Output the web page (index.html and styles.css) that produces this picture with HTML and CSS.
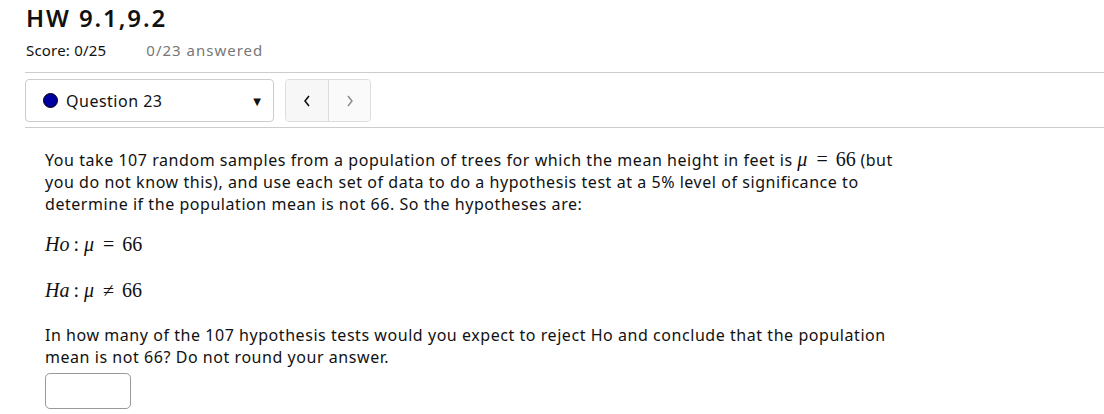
FILE: index.html
```html
<!DOCTYPE html>
<html>
<head>
<meta charset="utf-8">
<link rel="stylesheet" href="styles.css">
</head>
<body>
<div class="page">
  <h1 class="title">HW 9.1,9.2</h1>
  <div class="score-row">
    <span class="score">Score: 0/25</span>
    <span class="answered">0/23 answered</span>
  </div>
  <div class="nav-bar">
    <div class="select">
      <span class="dot"></span>
      <span class="q-label">Question 23</span>
      <span class="caret">&#9660;</span>
    </div>
    <div class="pager">
      <button class="pg prev"><svg width="10" height="14" viewBox="0 0 10 14"><path d="M7 2 L3 7 L7 12" fill="none" stroke="#111" stroke-width="1.6"/></svg></button>
      <button class="pg next"><svg width="10" height="14" viewBox="0 0 10 14"><path d="M3 2 L7 7 L3 12" fill="none" stroke="#888" stroke-width="1.4"/></svg></button>
    </div>
  </div>
  <div class="question">
    <p class="text">You take 107 random samples from a population of trees for which the mean height in feet is <span class="math"><i>μ</i><span class="op">=</span>66</span> (but you do not know this), and use each set of data to do a hypothesis test at a 5% level of significance to determine if the population mean is not 66. So the hypotheses are:</p>
    <p class="math-line"><span class="math"><i>Ho</i><span class="colon">:</span><i>μ</i><span class="op">=</span>66</span></p>
    <p class="math-line"><span class="math"><i>Ha</i><span class="colon">:</span><i>μ</i><span class="op">≠</span>66</span></p>
    <p class="text">In how many of the 107 hypothesis tests would you expect to reject Ho and conclude that the population mean is not 66? Do not round your answer.</p>
    <input class="answer" type="text">
  </div>
</div>
</body>
</html>
```
FILE: styles.css
```css
* { box-sizing: border-box; }
html, body { margin: 0; padding: 0; background: #fff; }
body {
  font-family: "Noto Sans", "DejaVu Sans", sans-serif;
  color: #111;
}
.page { padding: 0 0 0 25px; }
.title {
  margin: 0;
  padding: 3px 0 0 1px;
  font-size: 24px;
  font-weight: 600;
  line-height: 30px;
  letter-spacing: 1.9px;
}
.score-row {
  display: flex;
  gap: 40px;
  padding: 7px 0 0 1px;
  font-size: 15px;
  line-height: 20px;
  height: 39px;
}
.score { letter-spacing: 0.2px; }
.answered { color: #777; letter-spacing: 1px; }
.nav-bar {
  border-top: 1px solid #ccc;
  border-bottom: 1px solid #ccc;
  display: flex;
  gap: 11px;
  padding: 6px 0 5px 0;
}
.select {
  width: 249px;
  height: 43px;
  border: 1px solid #ccc;
  border-radius: 4px;
  display: flex;
  align-items: center;
  padding: 0 12px 0 17px;
}
.dot {
  width: 15px;
  height: 15px;
  border-radius: 50%;
  background: #0000a0;
  border: 1px solid #000;
}
.q-label { margin-left: 8px; font-size: 16px; letter-spacing: 0.5px; flex: 1; }
.caret { font-size: 10px; color: #111; }
.pager {
  display: flex;
  border: 1px solid #ddd;
  border-radius: 4px;
  overflow: hidden;
  height: 43px;
}
.pg {
  width: 42px;
  height: 41px;
  border: 0;
  padding: 0;
  display: flex;
  align-items: center;
  justify-content: center;
  background: #f7f7f7;
}
.pg.next { background: #fafafa; border-left: 1px solid #ddd; }
.question { padding: 20px 0 0 20px; width: 890px; }
.text {
  margin: 0;
  font-size: 16px;
  line-height: 22px;
  letter-spacing: 0.55px;
}
.math-line { margin: 15px 0 0 0; line-height: 29px; }
.math-line + .math-line { margin-top: 16px; }
.math-line + .text { margin-top: 18px; }
.math { font-family: "Liberation Serif", "DejaVu Serif", serif; font-size: 20px; letter-spacing: 0; }
.math i { font-style: italic; }
.op { padding: 0 8px 0 9px; }
.colon { padding: 0 5px 0 4px; }
.answer {
  display: block;
  margin-top: 5px;
  width: 86px;
  height: 36px;
  border: 1px solid #999;
  border-radius: 5px;
}
```
